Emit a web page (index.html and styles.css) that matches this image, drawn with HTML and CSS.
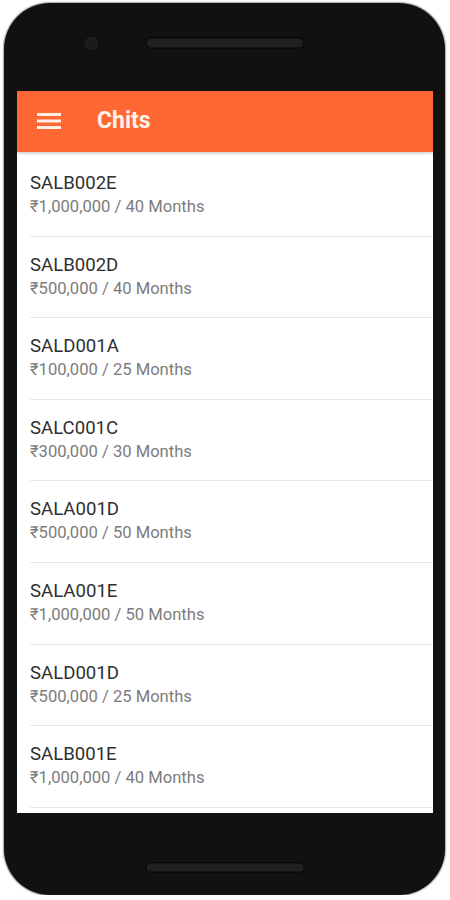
FILE: index.html
```html
<!DOCTYPE html>
<html lang="en">
<head>
  <meta charset="UTF-8">
  <title>Chits</title>
  <link rel="stylesheet" href="styles.css">
</head>
<body>
  <div class="phone">
    <div class="bezel-top">
      <span class="camera"></span>
      <span class="speaker"></span>
    </div>

    <div class="screen">
      <div class="app-bar">
        <svg class="menu-icon" width="24" height="18" viewBox="0 0 24 18">
          <rect x="0" y="1" width="24" height="3" fill="#fff1ea"/>
          <rect x="0" y="7.5" width="24" height="3" fill="#fff1ea"/>
          <rect x="0" y="14" width="24" height="3" fill="#fff1ea"/>
        </svg>
        <h1>Chits</h1>
      </div>

      <ul class="chit-list">
        <li class="chit">
          <p class="chit-name">SALB002E</p>
          <p class="chit-info">₹1,000,000 / 40 Months</p>
        </li>
        <li class="chit">
          <p class="chit-name">SALB002D</p>
          <p class="chit-info">₹500,000 / 40 Months</p>
        </li>
        <li class="chit">
          <p class="chit-name">SALD001A</p>
          <p class="chit-info">₹100,000 / 25 Months</p>
        </li>
        <li class="chit">
          <p class="chit-name">SALC001C</p>
          <p class="chit-info">₹300,000 / 30 Months</p>
        </li>
        <li class="chit">
          <p class="chit-name">SALA001D</p>
          <p class="chit-info">₹500,000 / 50 Months</p>
        </li>
        <li class="chit">
          <p class="chit-name">SALA001E</p>
          <p class="chit-info">₹1,000,000 / 50 Months</p>
        </li>
        <li class="chit">
          <p class="chit-name">SALD001D</p>
          <p class="chit-info">₹500,000 / 25 Months</p>
        </li>
        <li class="chit">
          <p class="chit-name">SALB001E</p>
          <p class="chit-info">₹1,000,000 / 40 Months</p>
        </li>
      </ul>
    </div>

    <div class="bezel-bottom">
      <span class="speaker"></span>
    </div>
  </div>
</body>
</html>
```

FILE: styles.css
```css
body {
  font-family: Roboto, "Liberation Sans", Arial, sans-serif;
  margin: 0;
  padding: 0;
  background: #ffffff;
}

.phone {
  width: 441px;
  height: 892px;
  margin: 3px 0 0 4px;
  background-color: #111111;
  border-radius: 46px;
  box-shadow: 0 0 0 1px #b4b4b4, 0 0 3px rgba(0, 0, 0, 0.35);
  display: flex;
  flex-direction: column;
  overflow: hidden;
}

.bezel-top {
  height: 88px;
  box-sizing: border-box;
  padding: 34px 0 0 81px;
  display: flex;
  align-items: flex-start;
  gap: 47px;
}

.camera {
  width: 13px;
  height: 13px;
  border-radius: 50%;
  background-color: #1a1a1a;
  box-shadow: inset 0 0 0 1px #262626;
}

.speaker {
  width: 160px;
  height: 12px;
  border-radius: 6px;
  background-color: #202020;
  box-shadow: inset 0 0 0 1.5px #080808;
}

.screen {
  height: 722px;
  margin: 0 12px 0 13px;
  background-color: #ffffff;
  overflow: hidden;
}

.app-bar {
  height: 61px;
  box-sizing: border-box;
  padding: 0 0 2px 20px;
  background-color: #ff6733;
  display: flex;
  align-items: center;
  gap: 36px;
  box-shadow: 0 1px 3px rgba(0, 0, 0, 0.25);
  position: relative;
}

.app-bar h1 {
  margin: 0;
  font-size: 23px;
  font-weight: 700;
  color: #fff3ec;
}

.chit-list {
  list-style: none;
  margin: 0;
  padding: 3px 0 0;
}

.chit {
  margin-left: 13px;
  padding: 16px 0 16.6px;
  border-bottom: 1px solid #e8e8e8;
}

.chit p {
  margin: 0;
  line-height: 24px;
}

.chit-name {
  font-size: 18.6px;
  color: #303030;
}

.chit-info {
  font-size: 16.6px;
  color: #7c7c7c;
}

.bezel-bottom {
  flex: 1;
  display: flex;
  justify-content: center;
  padding-top: 49px;
  box-sizing: border-box;
}

.bezel-bottom .speaker {
  height: 11px;
}
```
